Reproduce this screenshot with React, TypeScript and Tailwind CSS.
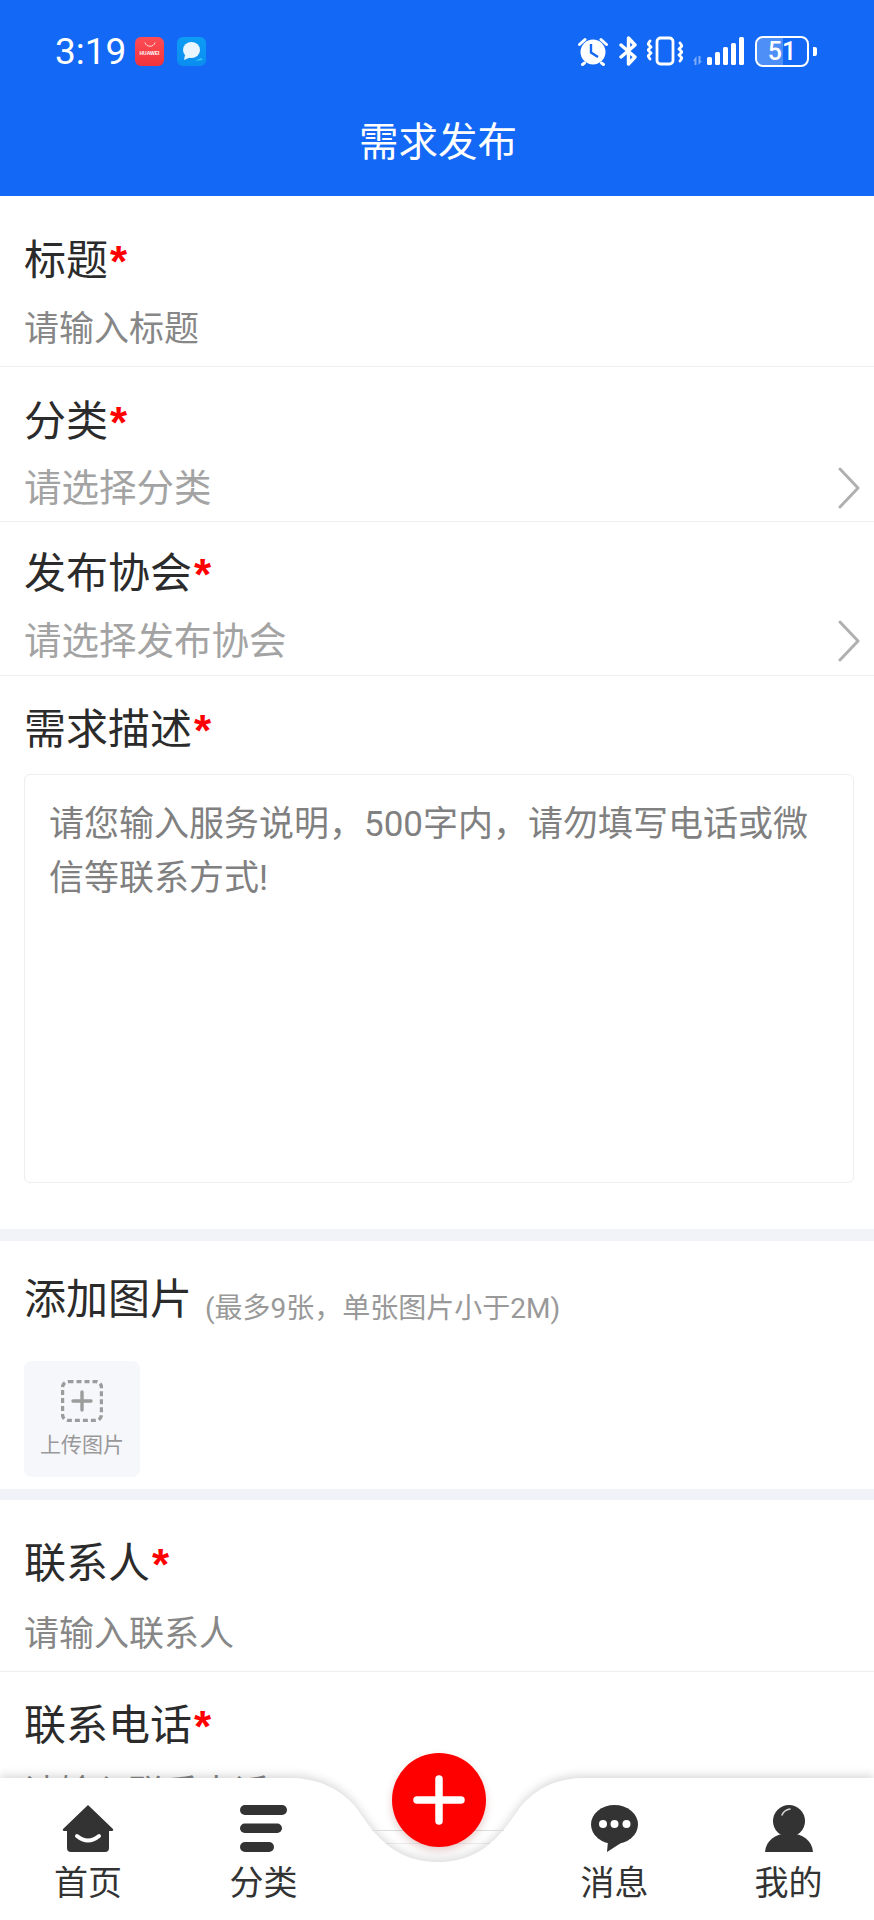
import { ReactNode } from "react";

interface RowProps {
  label: string;
  placeholder: string;
  select?: boolean;
  className: string;
  gap: string;
}

function Label({ children }: { children: ReactNode }) {
  return (
    <div className="flex h-[50px] items-center text-[42px] leading-[50px] text-[#2b2b2b]">
      <span>{children}</span>
      <span className="ml-[2px] mt-[2px] font-['Liberation_Sans'] text-[44px] leading-[50px] font-bold text-[#ff0000]">*</span>
    </div>
  );
}

function FieldRow({ label, placeholder, select, className, gap }: RowProps) {
  return (
    <div className={`border-b border-[#eeeeee] pl-[24px] pr-[14px] ${className}`}>
      <Label>{label}</Label>
      <div className={`flex h-[50px] items-center justify-between ${gap}`}>
        <span className={select ? "text-[37.5px] text-[#a3a3a3]" : "text-[35px] text-[#878787]"}>{placeholder}</span>
        {select && (
          <svg width="22" height="42" viewBox="0 0 22 42" fill="none" stroke="#b0b0b0" strokeWidth="3" strokeLinecap="round" strokeLinejoin="round">
            <path d="M2 2 L20 21 L2 40" />
          </svg>
        )}
      </div>
    </div>
  );
}

function StatusBar() {
  return (
    <div className="flex h-[102px] items-center pl-[55px] pr-[57px] text-white">
      <span className="w-[71px] font-['Roboto'] text-[37px] leading-none">3:19</span>
      <div className="ml-[9px] flex h-[29px] w-[29px] flex-col items-center rounded-[6px] bg-gradient-to-b from-[#ff4d55] to-[#f0323c]">
        <svg width="12" height="6" viewBox="0 0 12 6" fill="none" stroke="#ffdcdc" strokeWidth="1" className="mt-[5px]">
          <path d="M1 0.5 C2 5.5 10 5.5 11 0.5" />
        </svg>
        <span className="mt-[3px] font-['Liberation_Sans'] text-[5px] leading-none font-bold text-white">HUAWEI</span>
      </div>
      <div className="ml-[13px] flex h-[29px] w-[29px] items-center justify-center rounded-[6px] bg-gradient-to-b from-[#0d9cf5] to-[#0a8df0]">
        <svg width="22" height="21" viewBox="0 0 22 21">
          <path d="M20 17 L22 19 L14 20 Z" fill="#35c4f5" />
          <ellipse cx="10.5" cy="9" rx="8.5" ry="8" fill="#eaf6ff" />
          <path d="M4 14 L3 19 L10 16 Z" fill="#eaf6ff" />
        </svg>
      </div>
      <div className="flex-1" />
      {/* alarm */}
      <svg width="30" height="29" viewBox="0 0 30 29" fill="white">
        <circle cx="15" cy="15" r="12.5" />
        <path d="M1.5 7.5 L7 2.5 M23 2.5 L28.5 7.5 M6.5 26 L4.5 27.5 M23.5 26 L25.5 27.5" stroke="white" strokeWidth="3" strokeLinecap="round" />
        <path d="M13 7 V15.5 L20 20" fill="none" stroke="#1368f5" strokeWidth="2.4" />
      </svg>
      {/* bluetooth */}
      <svg width="19" height="30" viewBox="0 0 19 30" fill="none" stroke="white" strokeWidth="3.4" strokeLinecap="round" strokeLinejoin="round" className="ml-[11px]">
        <path d="M2 9 L16 21 L9.5 28 V2 L16 9 L2 21" />
      </svg>
      {/* vibrate */}
      <svg width="36" height="30" viewBox="0 0 36 30" fill="none" stroke="white" strokeWidth="2.8" strokeLinecap="round" strokeLinejoin="round" className="ml-[9px]">
        <rect x="10" y="2" width="16" height="26" rx="3.5" />
        <path d="M3 5 L1 8 L4 11 L1 14 L4 17 L1 20 L3 23" />
        <path d="M33 7 L35 10 L32 13 L35 16 L32 19 L35 22 L33 25" />
      </svg>
      {/* data arrows and signal */}
      <svg width="51" height="28" viewBox="0 0 51 28" className="ml-[10px]">
        <path d="M0 24 L3.5 19 L3.5 28 H1.5 V24 Z M5.5 19 H7.5 V24 H9 L5.5 28 Z" fill="white" opacity="0.45" />
        <rect x="14" y="20" width="5" height="8" rx="1.5" fill="white" />
        <rect x="22" y="15" width="5" height="13" rx="1.5" fill="white" />
        <rect x="30" y="10" width="5" height="18" rx="1.5" fill="white" />
        <rect x="38" y="6" width="5" height="22" rx="1.5" fill="white" />
        <rect x="46" y="0" width="5" height="28" rx="1.5" fill="white" />
      </svg>
      {/* battery */}
      <div className="relative ml-[11px] flex h-[31px] w-[54px] items-center justify-center overflow-hidden rounded-[8px] border-[2px] border-white">
        <div className="absolute inset-y-0 left-0 w-[51%] bg-white/25" />
        <span className="relative font-['Roboto'] text-[25px] leading-none font-medium">51</span>
      </div>
      <div className="ml-[4px] h-[9px] w-[4px] rounded-r-[2px] bg-white" />
    </div>
  );
}

function HomeIcon() {
  return (
    <svg width="52" height="47" viewBox="0 0 52 47">
      <path d="M26 0 L51 24 Q52 26 49 26 H47 V43 Q47 47 43 47 H9 Q5 47 5 43 V26 H3 Q0 26 1 24 Z" fill="#333333" />
      <path d="M15 31 Q26 40 37 31" fill="none" stroke="white" strokeWidth="4" strokeLinecap="round" />
    </svg>
  );
}

function MenuIcon() {
  return (
    <svg width="47" height="47" viewBox="0 0 47 47" fill="#333333">
      <rect x="0" y="0" width="47" height="10" rx="5" />
      <rect x="0" y="18.5" width="42" height="9.5" rx="4.7" />
      <rect x="0" y="37" width="34" height="10" rx="5" />
    </svg>
  );
}

function MessageIcon() {
  return (
    <svg width="47" height="47" viewBox="0 0 47 47">
      <ellipse cx="23.5" cy="19.5" rx="23.5" ry="19.5" fill="#333333" />
      <path d="M17 36 L16 47 L30 38 Z" fill="#333333" />
      <circle cx="12" cy="19" r="4" fill="white" />
      <circle cx="23.5" cy="19" r="4" fill="white" />
      <circle cx="35.5" cy="19" r="4" fill="white" />
    </svg>
  );
}

function UserIcon() {
  return (
    <svg width="48" height="47" viewBox="0 0 48 47">
      <circle cx="24" cy="16" r="16" fill="#333333" />
      <path d="M0 47 C1 36 9 29 24 28 C39 29 47 36 48 47 Z" fill="#333333" />
      <path d="M17 10 Q19 5 25 4" fill="none" stroke="#d8d8d8" strokeWidth="1.5" strokeLinecap="round" />
    </svg>
  );
}

const tabs = [
  { label: "首页", icon: <HomeIcon /> },
  { label: "分类", icon: <MenuIcon /> },
  null,
  { label: "消息", icon: <MessageIcon /> },
  { label: "我的", icon: <UserIcon /> },
];

function TabBar() {
  return (
    <div className="absolute bottom-0 left-0 h-[148px] w-full">
      <svg width="874" height="148" viewBox="0 0 874 148" className="absolute inset-0 overflow-visible drop-shadow-[0_-3px_4px_rgba(0,0,0,0.14)]">
        <path
          d="M0 6 H290 C322 6 342 20 354 33 C368 50 386 90 438 90 C490 90 508 50 522 33 C534 20 552 6 584 6 H874 V148 H0 Z"
          fill="white"
        />
      </svg>
      <div className="absolute left-[372px] top-[58px] h-px w-[132px] bg-[#dddddd]" />
      <div className="relative grid h-full grid-cols-[176px_175px_175px_177px_171px] pt-[33px]">
        {tabs.map((tab, i) =>
          tab ? (
            <div key={tab.label} className="flex flex-col items-center">
              <div className="flex h-[47px] items-center">{tab.icon}</div>
              <span className="mt-[11px] text-[34px] leading-[40px] text-[#333333]">{tab.label}</span>
            </div>
          ) : (
            <div key={i} />
          )
        )}
      </div>
      <div className="absolute left-[392px] top-[-19px] flex h-[94px] w-[94px] items-center justify-center rounded-full bg-[#ff0000] shadow-[0_4px_8px_rgba(120,0,0,0.2)]">
        <svg width="52" height="50" viewBox="0 0 52 50" stroke="white" strokeWidth="7.5" strokeLinecap="round">
          <path d="M4 25 H48 M26 4 V46" />
        </svg>
      </div>
    </div>
  );
}

export default function App() {
  return (
    <div className="relative h-[1920px] w-[874px] overflow-hidden bg-white font-['Roboto','Noto_Sans_CJK_SC',sans-serif]">
      <header className="h-[196px] bg-[#1368f5]">
        <StatusBar />
        <h1 className="h-[82px] pl-[2px] text-center text-[39.5px] leading-[82px] font-normal text-white">需求发布</h1>
      </header>

      <FieldRow label="标题" placeholder="请输入标题" className="h-[171px] pt-[40px]" gap="mt-[19px]" />
      <FieldRow label="分类" placeholder="请选择分类" select className="h-[155px] pt-[30px]" gap="mt-[16px]" />
      <FieldRow label="发布协会" placeholder="请选择发布协会" select className="h-[154px] pt-[27px]" gap="mt-[17px]" />

      <section className="h-[553px] pl-[24px] pr-[20px] pt-[29px]">
        <Label>需求描述</Label>
        <div className="mt-[19px] h-[409px] rounded-[6px] border border-[#eeeeee] px-[24px] pt-[23px] text-[35px] leading-[54px] text-[#808080]">
          请您输入服务说明，500字内，请勿填写电话或微信等联系方式!
        </div>
      </section>

      <div className="h-[12px] bg-[#f2f3f8]" />

      <section className="h-[248px] pl-[24px] pt-[34px]">
        <div className="flex h-[50px] items-center">
          <span className="text-[42px] leading-[50px] text-[#2b2b2b]">添加图片</span>
          <span className="ml-[13px] mt-[18px] text-[28px] leading-[40px] text-[#999999]">(最多9张，单张图片小于2M)</span>
        </div>
        <div className="mt-[36px] flex h-[116px] w-[116px] flex-col items-center rounded-[8px] bg-[#f6f7fb] pt-[19px]">
          <svg width="42" height="42" viewBox="0 0 42 42" fill="none" stroke="#9c9c9c">
            <rect x="1.5" y="1.5" width="39" height="39" rx="6" strokeWidth="3.4" strokeDasharray="5 3" />
            <path d="M21 12 V30 M12 21 H30" strokeWidth="3.4" strokeLinecap="round" />
          </svg>
          <span className="mt-[9px] text-[21px] leading-[28px] text-[#999999]">上传图片</span>
        </div>
      </section>

      <div className="h-[11px] bg-[#f2f3f8]" />

      <FieldRow label="联系人" placeholder="请输入联系人" className="h-[172px] pt-[39px]" gap="mt-[21px]" />
      <FieldRow label="联系电话" placeholder="请输入联系电话" className="h-[172px] pt-[29px]" gap="mt-[18px]" />

      <TabBar />
    </div>
  );
}
